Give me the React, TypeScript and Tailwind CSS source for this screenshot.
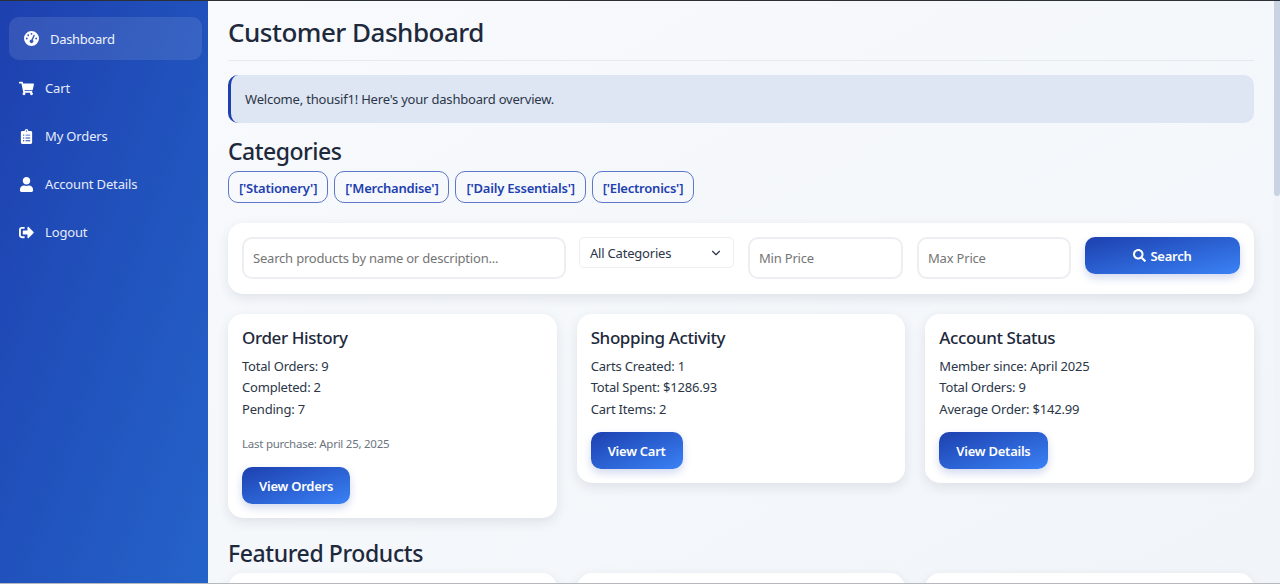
import { FaShoppingCart, FaClipboardList, FaUser, FaSignOutAlt, FaSearch } from "react-icons/fa";
import { FaGaugeHigh } from "react-icons/fa6";
import { ChevronDown } from "lucide-react";
import type { ReactNode } from "react";

const font = "font-['Noto_Sans','Open_Sans',sans-serif]";
const btn =
  "rounded-[10px] bg-gradient-to-br from-[#1e40af] to-[#3b82f6] text-white font-semibold text-[13px] tracking-[-0.25px] shadow-[0_4px_8px_rgba(30,64,175,0.2)] flex items-center justify-center pt-[3px]";

function NavItem({ icon, label }: { icon: ReactNode; label: string }) {
  return (
    <div className="h-[44px] mb-1 pl-[9px] pr-[10px] flex items-center gap-[11px] text-[13px] tracking-[-0.15px] text-[#e6ebfa]">
      <span className="w-4 flex justify-center text-[15px] text-white">{icon}</span>
      <span className="pt-[1px]">{label}</span>
    </div>
  );
}

function Chip({ label }: { label: string }) {
  return (
    <span className="h-8 px-[10px] pt-[3px] flex items-center rounded-[10px] border border-[#1e40af]/70 text-[13px] tracking-[-0.22px] font-semibold text-[#1e40af]">
      {label}
    </span>
  );
}

function Field({ placeholder, className }: { placeholder: string; className: string }) {
  return (
    <div className={`h-[42px] px-[9px] pt-[1px] flex items-center rounded-[10px] border-2 border-[#eceef2] bg-white text-[13px] tracking-[-0.2px] text-[#757575] ${className}`}>
      {placeholder}
    </div>
  );
}

function StatCard({ title, lines, note, action }: { title: string; lines: string[]; note?: string; action: string }) {
  return (
    <div className="flex-1 rounded-[15px] bg-white p-[14px] shadow-[0_4px_12px_rgba(30,41,59,0.1)]">
      <h3 className="-mt-[1px] text-[17px] leading-[22px] tracking-[-0.4px] font-medium text-[#1e293b]">{title}</h3>
      <div className="mt-[6.5px] text-[13px] leading-[21.5px] tracking-[-0.2px] text-[#2b3648]">
        {lines.map((line) => (
          <p key={line}>{line}</p>
        ))}
      </div>
      {note && <p className="mt-[14.5px] text-[11.5px] leading-[18px] tracking-[-0.25px] text-[#6c757d]">{note}</p>}
      <button className={`${btn} h-[37px] px-[17px] ${note ? "mt-[14px]" : "mt-[11.5px]"}`}>{action}</button>
    </div>
  );
}

export default function App() {
  return (
    <div className={`${font} h-screen overflow-hidden flex flex-col bg-[#f3f6fb]`}>
      <div className="h-[1px] bg-[#2b2f36]" />
      <div className="flex-1 min-h-0 flex">
        <aside className="w-[208px] shrink-0 pl-[9px] pr-[6px] pt-[16px] bg-gradient-to-br from-[#1e40af] to-[#2563c9]">
          <div className="h-[43px] mb-[6px] px-[14px] flex items-center gap-[11px] rounded-[10px] bg-white/10 text-[13px] tracking-[-0.3px] text-[#eef2fc]">
            <span className="w-4 flex justify-center text-[15px] text-white"><FaGaugeHigh /></span>
            <span className="pt-[2px]">Dashboard</span>
          </div>
          <NavItem icon={<FaShoppingCart />} label="Cart" />
          <NavItem icon={<FaClipboardList />} label="My Orders" />
          <NavItem icon={<FaUser />} label="Account Details" />
          <NavItem icon={<FaSignOutAlt />} label="Logout" />
        </aside>
        <main className="flex-1 min-w-0 overflow-hidden px-[20px] pt-[13px] bg-gradient-to-br from-[#f8fafd] to-[#f1f5f9]">
          <h1 className="text-[26px] leading-[36px] tracking-[-0.5px] font-medium text-[#1e293b] pb-[10px] border-b border-[#e6e9ee]">Customer Dashboard</h1>
          <div className="mt-[14px] h-[48px] pl-[14px] pt-[1px] flex items-center rounded-[10px] border-l-[3px] border-[#1e40af] bg-[#dfe6f3] text-[13px] tracking-[-0.2px] text-[#2b3648]">
            Welcome, thousif1! Here's your dashboard overview.
          </div>
          <h2 className="mt-[12px] text-[23px] leading-[32px] tracking-[-0.5px] font-medium text-[#1e293b]">Categories</h2>
          <div className="mt-[4px] flex gap-[6px]">
            <Chip label="['Stationery']" />
            <Chip label="['Merchandise']" />
            <Chip label="['Daily Essentials']" />
            <Chip label="['Electronics']" />
          </div>
          <div className="mt-[20px] h-[71px] p-[14px] flex items-start gap-[14px] rounded-[15px] bg-white shadow-[0_4px_12px_rgba(30,41,59,0.1)]">
            <Field placeholder="Search products by name or description..." className="w-[324px]" />
            <div className="-ml-[1px] w-[155px] h-[31px] px-[10px] pt-[2px] flex items-center justify-between rounded-[5px] border border-[#eceef2] bg-white text-[13px] tracking-[-0.2px] text-[#2b3648]">
              All Categories
              <ChevronDown size={14} strokeWidth={2} className="-mt-[2px]" />
            </div>
            <Field placeholder="Min Price" className="w-[155px]" />
            <Field placeholder="Max Price" className="w-[154px]" />
            <button className={`${btn} h-[37px] w-[155px] gap-[4px]`}>
              <FaSearch className="text-[13px] -mt-[3px]" />
              Search
            </button>
          </div>
          <div className="mt-[20px] flex items-start gap-[20px]">
            <StatCard title="Order History" lines={["Total Orders: 9", "Completed: 2", "Pending: 7"]} note="Last purchase: April 25, 2025" action="View Orders" />
            <StatCard title="Shopping Activity" lines={["Carts Created: 1", "Total Spent: $1286.93", "Cart Items: 2"]} action="View Cart" />
            <StatCard title="Account Status" lines={["Member since: April 2025", "Total Orders: 9", "Average Order: $142.99"]} action="View Details" />
          </div>
          <h2 className="mt-[19px] text-[23px] leading-[32px] tracking-[-0.4px] font-medium text-[#1e293b]">Featured Products</h2>
          <div className="mt-[4px] flex gap-[20px]">
            <div className="flex-1 h-[40px] rounded-[15px] bg-white shadow-[0_4px_12px_rgba(30,41,59,0.1)]" />
            <div className="flex-1 h-[40px] rounded-[15px] bg-white shadow-[0_4px_12px_rgba(30,41,59,0.1)]" />
            <div className="flex-1 h-[40px] rounded-[15px] bg-white shadow-[0_4px_12px_rgba(30,41,59,0.1)]" />
          </div>
        </main>
        <div className="w-[6px] shrink-0 bg-[#f1f5f9]">
          <div className="h-[195px] rounded-b-[3px] bg-[#c9d3e2]" />
        </div>
      </div>
      <div className="h-[1px] bg-[#b5b8bd]" />
    </div>
  );
}
